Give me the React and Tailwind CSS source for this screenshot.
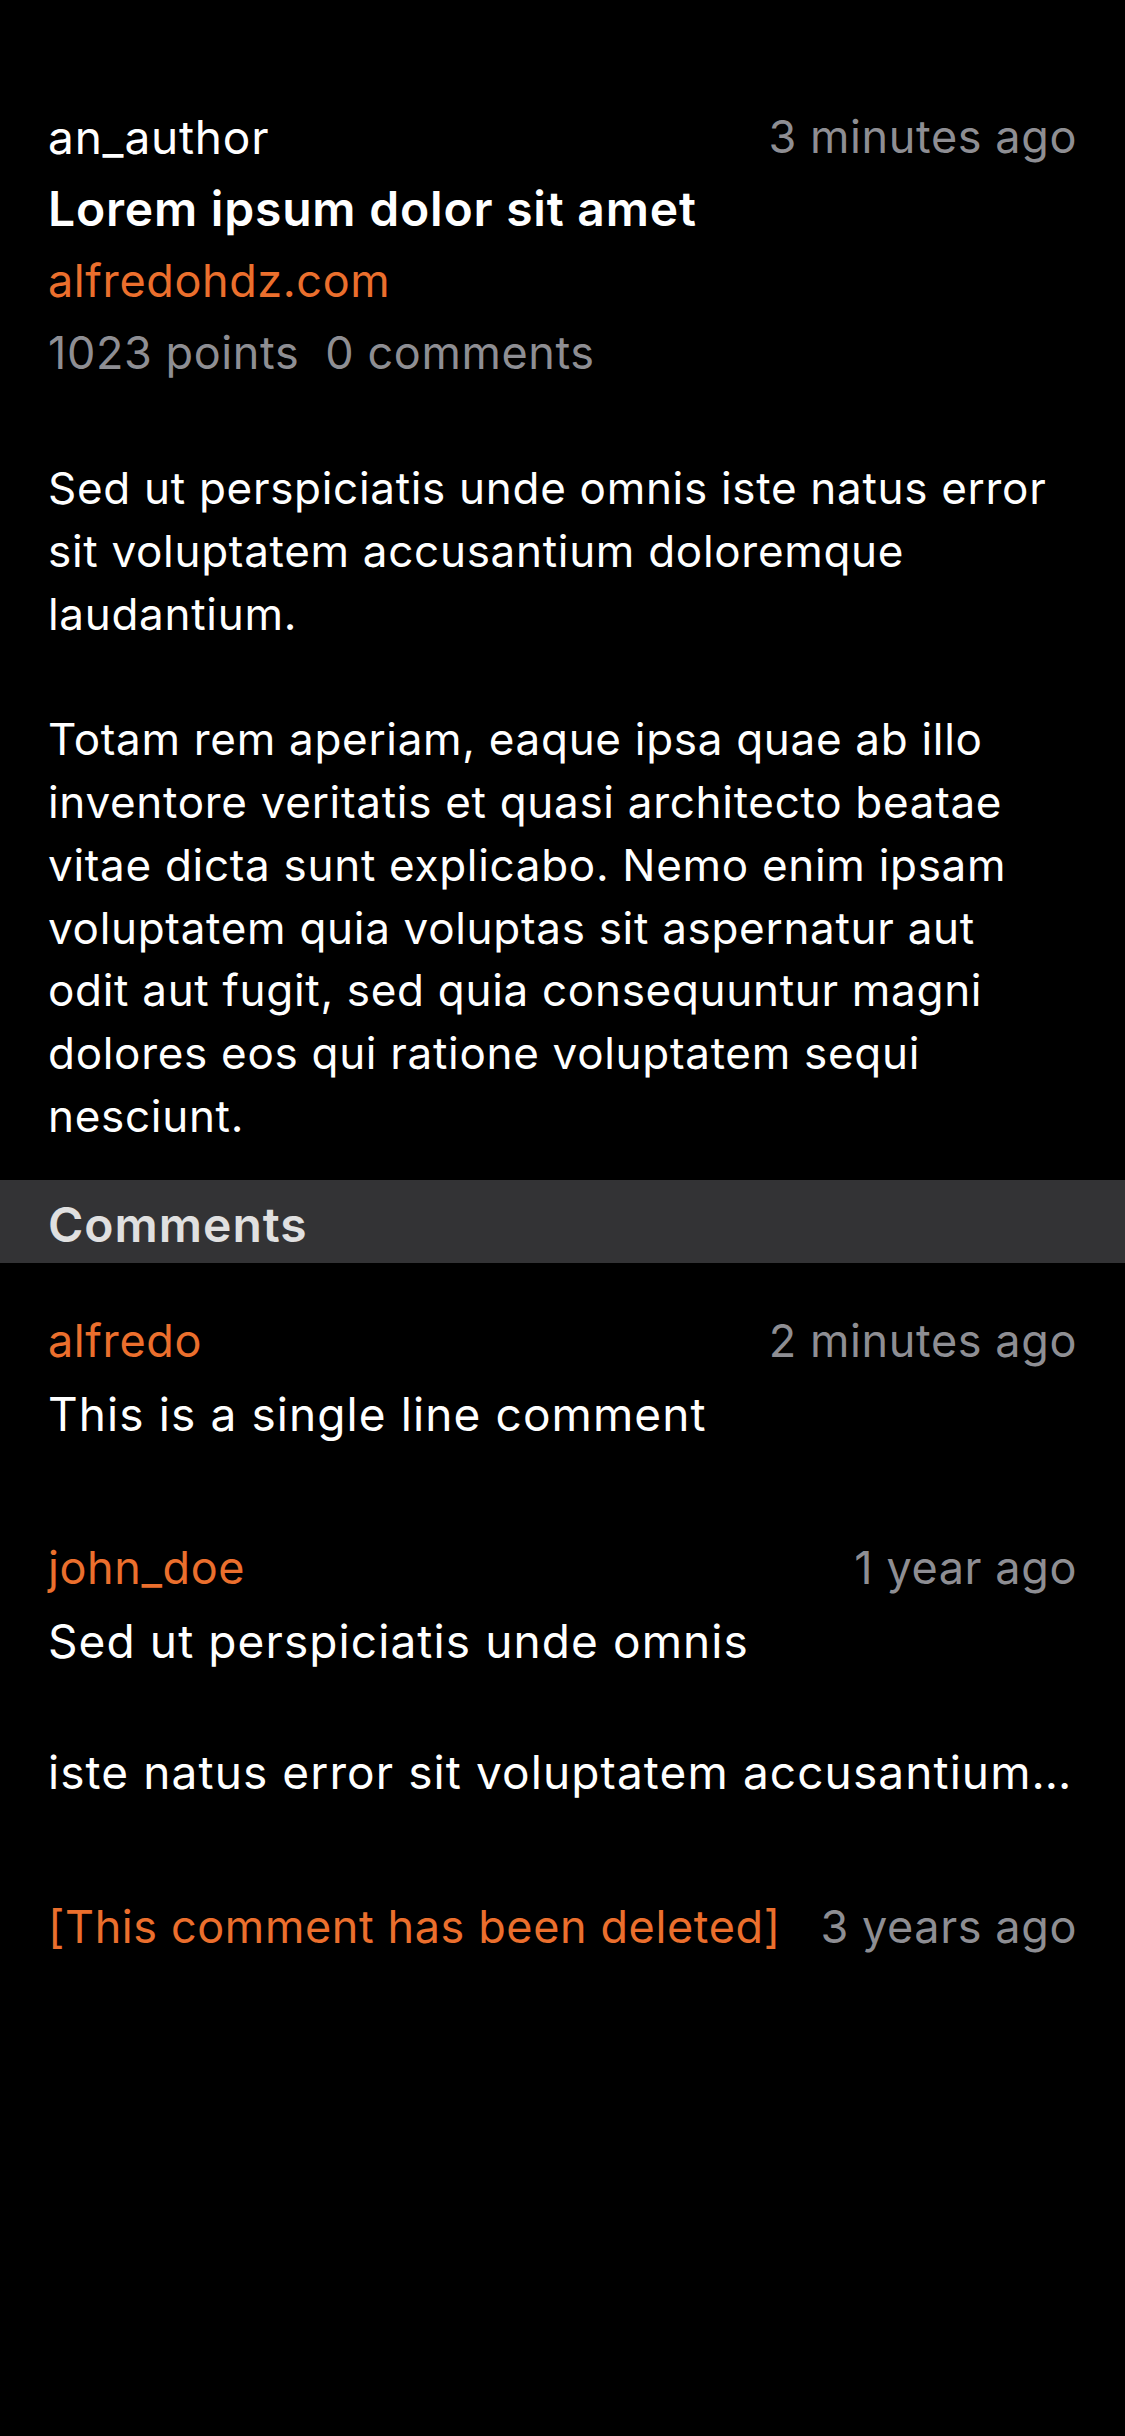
import React from 'react';

const post = {
  author: 'an_author',
  time: '3 minutes ago',
  title: 'Lorem ipsum dolor sit amet',
  url: 'alfredohdz.com',
  points: 1023,
  comments: 0,
  text:
    'Sed ut perspiciatis unde omnis iste natus error sit voluptatem accusantium doloremque laudantium.\n\nTotam rem aperiam, eaque ipsa quae ab illo inventore veritatis et quasi architecto beatae vitae dicta sunt explicabo. Nemo enim ipsam voluptatem quia voluptas sit aspernatur aut odit aut fugit, sed quia consequuntur magni dolores eos qui ratione voluptatem sequi nesciunt.',
};

const comments = [
  { id: 1, user: 'alfredo', time: '2 minutes ago', text: 'This is a single line comment' },
  {
    id: 2,
    user: 'john_doe',
    time: '1 year ago',
    text: 'Sed ut perspiciatis unde omnis\n\niste natus error sit voluptatem accusantium doloremque laudantium, totam rem aperiam.',
  },
  { id: 3, deleted: true, time: '3 years ago' },
];

// secondary text (usernames, links, times) is a touch smaller than body copy
const meta = 'text-[45px] tracking-[0.6px]';

const Comment = ({ comment }) => {
  if (comment.deleted) {
    return (
      <div className={`flex justify-between items-center leading-[65px] ${meta}`}>
        <span className="text-[#eb6f2d]">[This comment has been deleted]</span>
        <span className="text-[#8e8e93]">{comment.time}</span>
      </div>
    );
  }
  return (
    <div>
      <div className={`flex justify-between items-center leading-[65px] ${meta}`}>
        <span className="text-[#eb6f2d]">{comment.user}</span>
        <span className="text-[#8e8e93]">{comment.time}</span>
      </div>
      <p className="mt-[9px] leading-[65.5px] tracking-[1.1px] text-white whitespace-pre-line line-clamp-3">
        {comment.text}
      </p>
    </div>
  );
};

export default function App() {
  return (
    <div
      className="w-[1125px] min-h-[2436px] bg-black text-white text-[46px] tracking-[0.8px]"
      style={{ fontFamily: 'Inter, "Noto Sans", sans-serif' }}
    >
      {/* header */}
      <div className="px-12 pt-[101px]">
        <div className="flex justify-between items-center leading-[72px]">
          <span>{post.author}</span>
          <span className={`text-[#8e8e93] ${meta}`}>{post.time}</span>
        </div>
        <h1 className="text-[48px] font-semibold leading-[72px]">{post.title}</h1>
        <div className={`leading-[72px] text-[#eb6f2d] ${meta}`}>{post.url}</div>
        <div className={`leading-[72px] text-[#8e8e93] flex gap-[26px] ${meta}`}>
          <span>{post.points} points</span>
          <span>{post.comments} comments</span>
        </div>
      </div>

      <p className="pl-12 pr-[62px] mt-[68px] mb-[32px] text-[44px] tracking-[0.7px] leading-[62.8px] whitespace-pre-line">
        {post.text}
      </p>

      <div className="h-[83px] bg-[#333335] px-12 pt-[6px]">
        <h2 className="text-[48px] tracking-[1px] font-semibold leading-[77px] text-[#e0e0e0]">Comments</h2>
      </div>

      <div className="px-12 pt-[45px] flex flex-col gap-[88px]">
        {comments.map((c) => (
          <Comment key={c.id} comment={c} />
        ))}
      </div>
    </div>
  );
}
